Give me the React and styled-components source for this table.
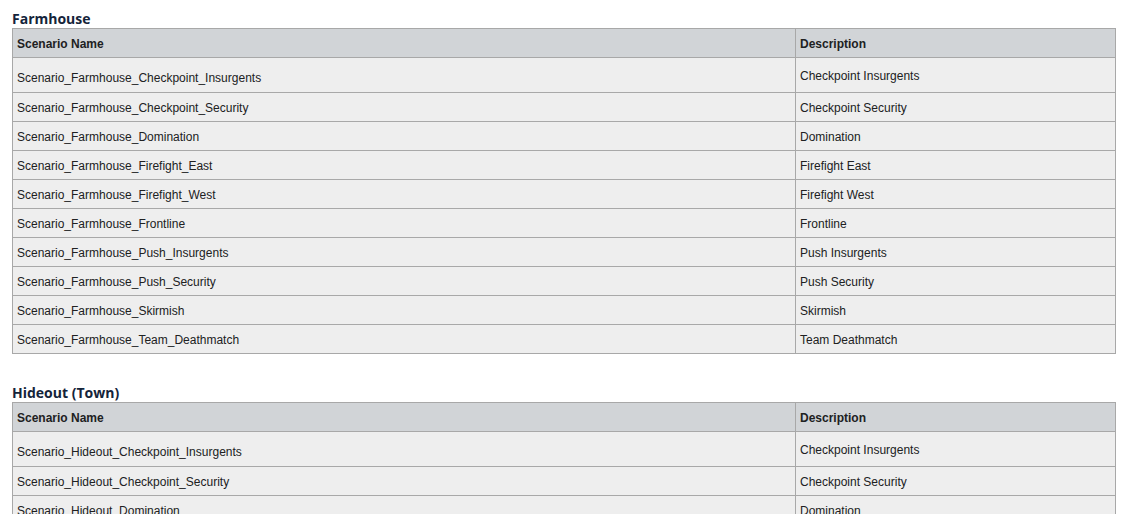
import styled, { createGlobalStyle } from "styled-components";

const GlobalStyle = createGlobalStyle`
  body {
    margin: 0;
    background: #ffffff;
    font-family: "Liberation Sans", Arial, sans-serif;
  }
`;

const Page = styled.div`
  padding: 8px 10px 0 12px;
  display: flex;
  flex-direction: column;
  gap: 28px;
`;

const Section = styled.section`
  display: flex;
  flex-direction: column;
`;

const Heading = styled.h3`
  margin: 0;
  height: 20px;
  line-height: 21px;
  font-family: "Open Sans", "Liberation Sans", sans-serif;
  font-size: 14px;
  font-weight: 700;
  color: #14243a;
`;

const Table = styled.table`
  width: 1104px;
  border-collapse: collapse;
  table-layout: fixed;
  font-size: 12px;
  color: #202122;
`;

const HeadCell = styled.th`
  height: 26px;
  padding: 2px 4px 0;
  border: 1px solid #a8a8a8;
  background: #d1d4d7;
  text-align: left;
  font-weight: 700;
  width: ${(props) => props.width || "auto"};
`;

// first row of each table is taller, and its name cell sits a little lower
const Cell = styled.td`
  height: ${(props) => (props.$drop ? "28px" : props.$tall ? "32px" : "26px")};
  padding: ${(props) => (props.$drop ? "6px 4px 0" : "2px 4px 0")};
  border: 1px solid #a8a8a8;
  background: #eeeeee;
  vertical-align: middle;
`;

const maps = [
  {
    title: "Farmhouse",
    prefix: "Scenario_Farmhouse_",
    rows: [
      ["Checkpoint_Insurgents", "Checkpoint Insurgents"],
      ["Checkpoint_Security", "Checkpoint Security"],
      ["Domination", "Domination"],
      ["Firefight_East", "Firefight East"],
      ["Firefight_West", "Firefight West"],
      ["Frontline", "Frontline"],
      ["Push_Insurgents", "Push Insurgents"],
      ["Push_Security", "Push Security"],
      ["Skirmish", "Skirmish"],
      ["Team_Deathmatch", "Team Deathmatch"],
    ],
  },
  {
    title: "Hideout (Town)",
    prefix: "Scenario_Hideout_",
    rows: [
      ["Checkpoint_Insurgents", "Checkpoint Insurgents"],
      ["Checkpoint_Security", "Checkpoint Security"],
      ["Domination", "Domination"],
      ["Firefight_East", "Firefight East"],
      ["Firefight_West", "Firefight West"],
    ],
  },
];

const App = () => {
  return (
    <>
      <GlobalStyle />
      <Page>
        {maps.map((map) => (
          <Section key={map.title}>
            <Heading>{map.title}</Heading>
            <Table>
              <thead>
                <tr>
                  <HeadCell width="774px">Scenario Name</HeadCell>
                  <HeadCell>Description</HeadCell>
                </tr>
              </thead>
              <tbody>
                {map.rows.map(([name, desc], i) => (
                  <tr key={name}>
                    <Cell $tall={i === 0} $drop={i === 0}>
                      {map.prefix + name}
                    </Cell>
                    <Cell $tall={i === 0}>{desc}</Cell>
                  </tr>
                ))}
              </tbody>
            </Table>
          </Section>
        ))}
      </Page>
    </>
  );
};

export default App;
